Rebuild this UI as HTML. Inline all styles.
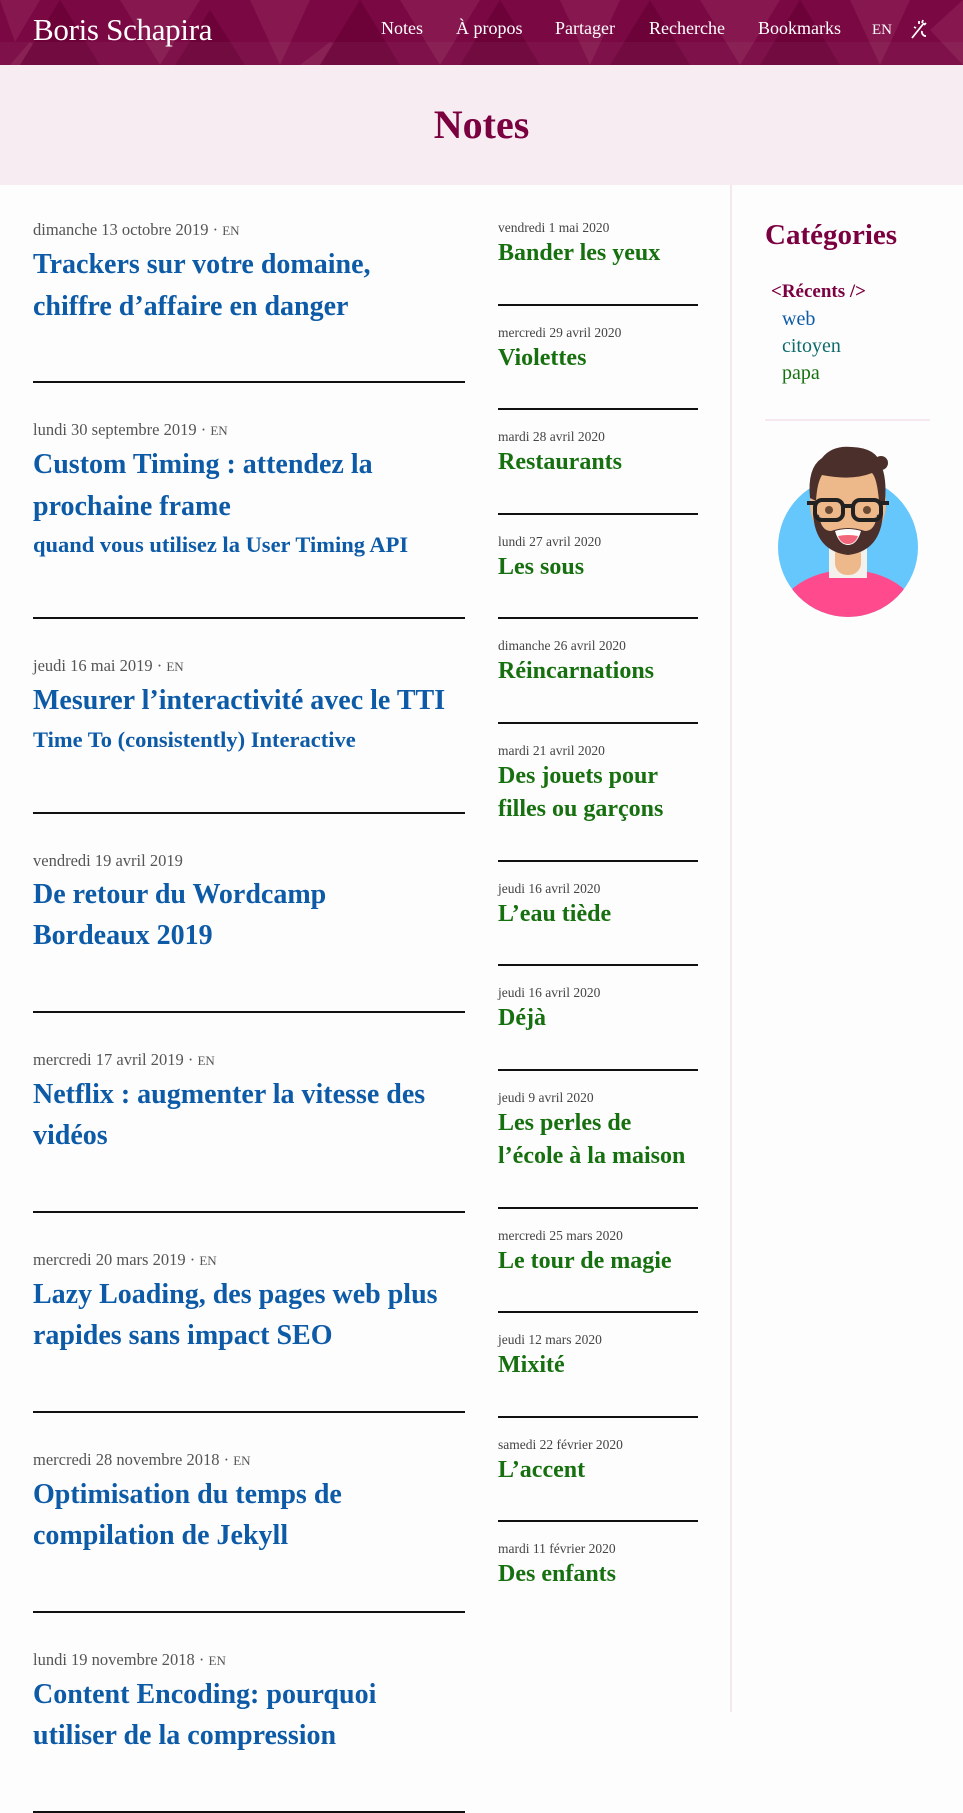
<!DOCTYPE html>
<html><head><meta charset="utf-8"><style>
*{margin:0;padding:0;box-sizing:border-box}
body{width:963px;height:1712px;overflow:hidden;background:#fdfdfd;font-family:"Liberation Serif",serif;position:relative}
header{position:absolute;left:0;top:0;width:963px;height:65px;background:#7a0843;overflow:hidden}
header svg{position:absolute;left:0;top:0}
.brand{position:absolute;left:33px;top:12px;color:#fff;font-size:31px;letter-spacing:-0.3px}
.nav{position:absolute;top:18px;color:#fff;font-size:18px;white-space:nowrap}
.band{position:absolute;top:65px;left:0;width:963px;height:120px;background:#f8ecf3;text-align:center}
.band h1{font-size:40px;line-height:120px;color:#7a0040;font-weight:bold}
.vline{position:absolute;left:730px;top:185px;width:2px;height:1527px;background:#f3e8ee}
.left{position:absolute;left:33px;top:185px;width:432px}
.li{padding:35px 0 54px;border-bottom:2px solid #111;white-space:nowrap}
.li + .li{padding-top:37px}
.d{font-size:16.5px;line-height:20px;color:#555}
.d small{font-size:13px}
.t{font-size:28px;line-height:41.5px;color:#0d5aa7;font-weight:bold;margin-top:3px}
.s{font-size:22.5px;line-height:36px;color:#0d5aa7;font-weight:bold}
.mid{position:absolute;left:498px;top:185px;width:200px;padding-top:16px}
.mi{padding:19px 0 33px;border-bottom:2px solid #111;white-space:nowrap}
.md{font-size:13.5px;line-height:16px;color:#444}
.mt{font-size:24px;line-height:33.5px;color:#17700f;font-weight:bold;margin-top:1px}
.side{position:absolute;left:765px;top:185px;width:165px}
.side h2{position:absolute;top:34px;font-size:29px;color:#7a0040;white-space:nowrap}
.cat{position:absolute;font-size:20px;white-space:nowrap}
.sep{position:absolute;left:0;top:234px;width:165px;height:2px;background:#f5e9ef}
</style></head><body>
<header>
<svg width="963" height="65" viewBox="0 0 963 65">
<g fill="#86184f"><polygon points="0,0 40,0 15,42"/><polygon points="120,0 200,0 160,65"/><polygon points="250,0 310,0 280,65"/><polygon points="400,0 480,0 440,65"/><polygon points="560,0 620,0 590,65"/><polygon points="700,0 780,0 740,65"/><polygon points="850,0 910,0 880,65"/><polygon points="30,42 60,65 10,65"/><polygon points="330,42 370,65 300,65"/><polygon points="640,42 680,65 610,65"/><polygon points="930,30 963,0 963,65"/></g>
<g fill="#6d0239"><polygon points="60,0 100,65 20,65"/><polygon points="210,10 245,65 175,65"/><polygon points="360,0 400,65 320,65"/><polygon points="500,0 540,65 460,65"/><polygon points="650,0 690,65 610,65"/><polygon points="800,0 840,65 760,65"/></g>
<rect x="0" y="42" width="963" height="23" fill="#ffffff" opacity="0.04"/>
</svg>
<div class="brand">Boris Schapira</div>
<div class="nav" style="left:381px">Notes</div>
<div class="nav" style="left:456px">À propos</div>
<div class="nav" style="left:555px">Partager</div>
<div class="nav" style="left:649px">Recherche</div>
<div class="nav" style="left:758px">Bookmarks</div>
<div class="nav" style="left:872px;font-size:15px;top:22px">EN</div>
<svg style="left:908px;top:19px" width="22" height="22" viewBox="0 0 22 22" fill="none" stroke="#fff" stroke-width="1.8"><path d="M4 19 L16 4"/><path d="M11 2v3M15 1l-1 3M18 4l-2 2M6 8l2 1M14 12a4 4 0 0 0 4 5"/></svg>
</header>
<div class="band"><h1>Notes</h1></div>
<div class="vline"></div>
<div class="left">
<div class="li"><div class="d">dimanche 13 octobre 2019 · <small>EN</small></div><div class="t">Trackers sur votre domaine,<br>chiffre d’affaire en danger</div></div>
<div class="li"><div class="d">lundi 30 septembre 2019 · <small>EN</small></div><div class="t">Custom Timing : attendez la<br>prochaine frame</div><div class="s">quand vous utilisez la User Timing API</div></div>
<div class="li"><div class="d">jeudi 16 mai 2019 · <small>EN</small></div><div class="t">Mesurer l’interactivité avec le TTI</div><div class="s">Time To (consistently) Interactive</div></div>
<div class="li"><div class="d">vendredi 19 avril 2019</div><div class="t">De retour du Wordcamp<br>Bordeaux 2019</div></div>
<div class="li"><div class="d">mercredi 17 avril 2019 · <small>EN</small></div><div class="t">Netflix : augmenter la vitesse des<br>vidéos</div></div>
<div class="li"><div class="d">mercredi 20 mars 2019 · <small>EN</small></div><div class="t">Lazy Loading, des pages web plus<br>rapides sans impact SEO</div></div>
<div class="li"><div class="d">mercredi 28 novembre 2018 · <small>EN</small></div><div class="t">Optimisation du temps de<br>compilation de Jekyll</div></div>
<div class="li"><div class="d">lundi 19 novembre 2018 · <small>EN</small></div><div class="t">Content Encoding: pourquoi<br>utiliser de la compression</div></div>
</div>
<div class="mid">
<div class="mi"><div class="md">vendredi 1 mai 2020</div><div class="mt">Bander les yeux</div></div>
<div class="mi"><div class="md">mercredi 29 avril 2020</div><div class="mt">Violettes</div></div>
<div class="mi"><div class="md">mardi 28 avril 2020</div><div class="mt">Restaurants</div></div>
<div class="mi"><div class="md">lundi 27 avril 2020</div><div class="mt">Les sous</div></div>
<div class="mi"><div class="md">dimanche 26 avril 2020</div><div class="mt">Réincarnations</div></div>
<div class="mi"><div class="md">mardi 21 avril 2020</div><div class="mt">Des jouets pour<br>filles ou garçons</div></div>
<div class="mi"><div class="md">jeudi 16 avril 2020</div><div class="mt">L’eau tiède</div></div>
<div class="mi"><div class="md">jeudi 16 avril 2020</div><div class="mt">Déjà</div></div>
<div class="mi"><div class="md">jeudi 9 avril 2020</div><div class="mt">Les perles de<br>l’école à la maison</div></div>
<div class="mi"><div class="md">mercredi 25 mars 2020</div><div class="mt">Le tour de magie</div></div>
<div class="mi"><div class="md">jeudi 12 mars 2020</div><div class="mt">Mixité</div></div>
<div class="mi"><div class="md">samedi 22 février 2020</div><div class="mt">L’accent</div></div>
<div class="mi" style="border:none"><div class="md">mardi 11 février 2020</div><div class="mt">Des enfants</div></div>
</div>
<div class="side">
<h2>Catégories</h2>
<div class="cat" style="left:6px;top:96px;color:#7a0040;font-weight:bold;font-size:19px">&lt;Récents /&gt;</div>
<div class="cat" style="left:17px;top:123px;color:#0d5aa7">web</div>
<div class="cat" style="left:17px;top:150px;color:#0f6a6a">citoyen</div>
<div class="cat" style="left:17px;top:177px;color:#17700f">papa</div>
<div class="sep"></div>
<svg style="position:absolute;left:12px;top:258px" width="142" height="175" viewBox="0 0 142 175">
<defs><clipPath id="c"><circle cx="71" cy="104" r="70"/></clipPath></defs>
<circle cx="71" cy="104" r="70" fill="#66c7fc"/>
<g clip-path="url(#c)"><ellipse cx="71" cy="175" rx="70" ry="48" fill="#ff4b8d"/><rect x="52" y="105" width="38" height="30" fill="#f4f0ec"/><rect x="58" y="100" width="26" height="32" rx="12" fill="#eeb98a"/></g>
<ellipse cx="71" cy="60" rx="38" ry="44" fill="#eeb98a"/>
<path d="M33 55 Q30 25 45 15 Q55 2 75 4 Q100 5 104 22 Q110 35 108 58 L102 58 Q100 35 95 30 Q75 38 45 32 Q40 40 39 58 Z" fill="#4b2f2b"/>
<circle cx="104" cy="20" r="7" fill="#4b2f2b"/>
<path d="M36 70 Q38 108 71 112 Q104 108 106 70 L100 72 Q98 88 88 88 Q71 82 54 88 Q44 88 42 72 Z" fill="#4b2f2b"/>
<path d="M58 88 Q71 84 84 88 Q80 102 71 102 Q62 102 58 88Z" fill="#fff"/><path d="M61 93 Q71 91 81 93 Q78 101 71 101 Q64 101 61 93Z" fill="#f2657a"/>
<rect x="38" y="57" width="28" height="20" rx="7" fill="none" stroke="#222" stroke-width="4"/>
<rect x="76" y="57" width="28" height="20" rx="7" fill="none" stroke="#222" stroke-width="4"/>
<path d="M30 60h8M66 63h10M104 60h8" stroke="#222" stroke-width="4"/>
<circle cx="52" cy="67" r="4" fill="#6b4a33"/><circle cx="90" cy="67" r="4" fill="#6b4a33"/>
</svg>
</div>
</body></html>
